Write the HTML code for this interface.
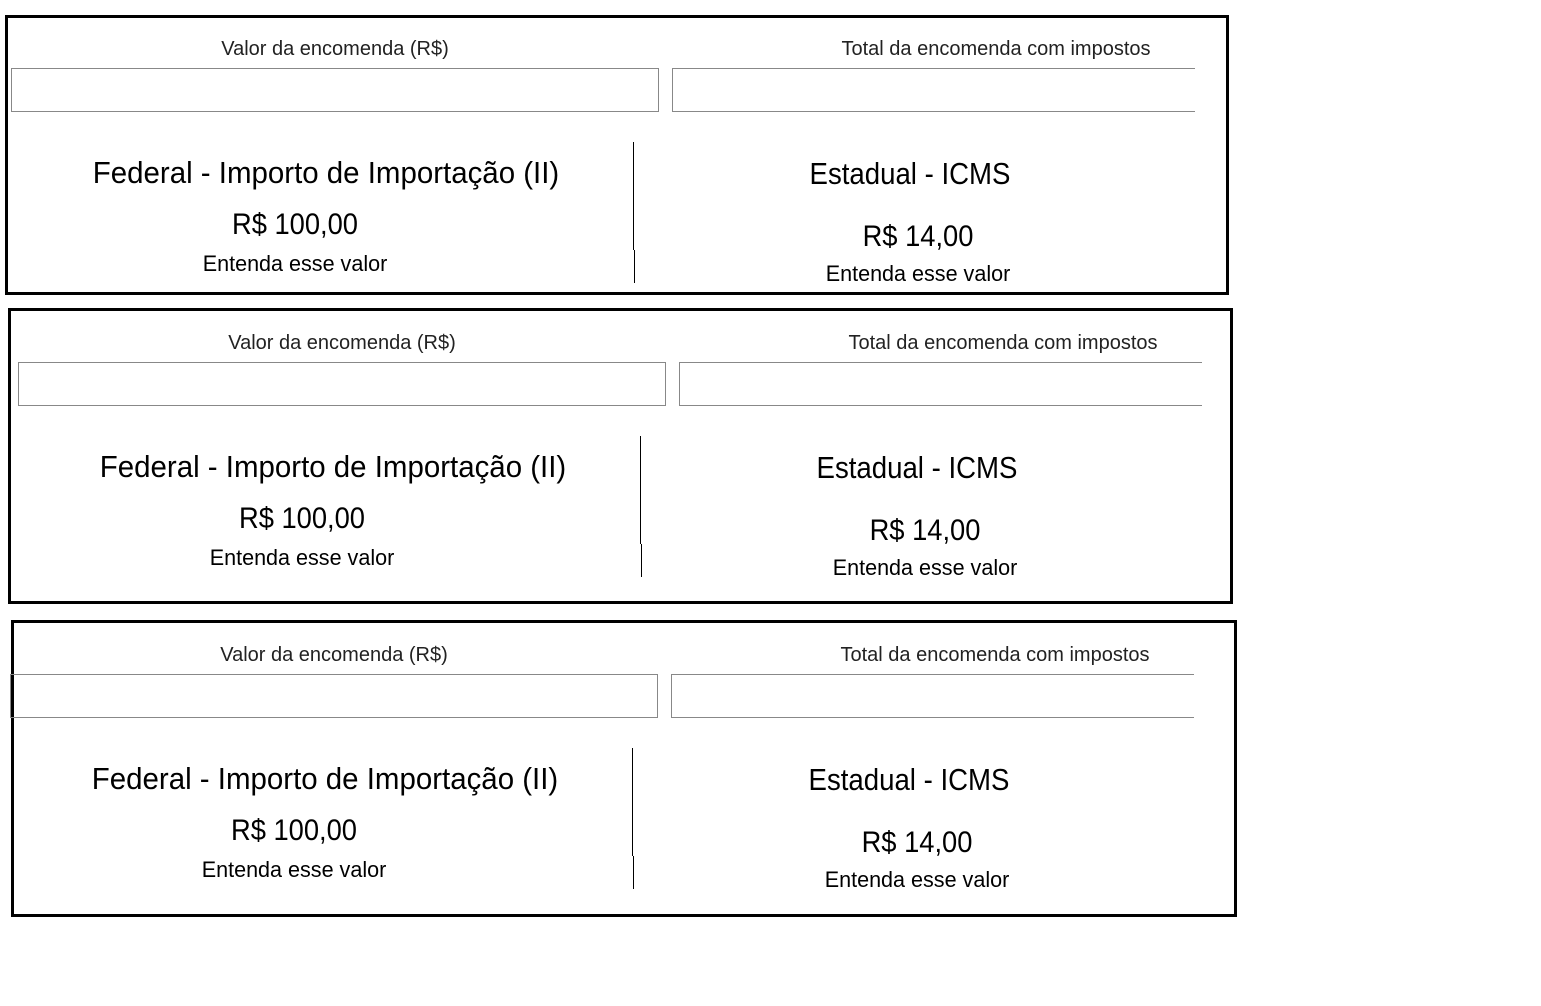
<!DOCTYPE html>
<html><head><meta charset="utf-8"><style>
body{margin:0;width:1541px;height:927px;background:#fff;position:relative;overflow:hidden;font-family:"Liberation Sans",Arial,sans-serif;color:#000}
.b{position:absolute;border:3px solid #000;box-sizing:border-box}
.c{position:absolute;white-space:nowrap;transform:translateX(-50%)}
.c span{display:inline-block}
.lab{font-size:20px;color:#222}
.in{position:absolute;border:1px solid #888;box-sizing:border-box;height:44px}
.in2{border-right:none}
.h{font-size:31px}
.h span{transform:scaleX(.95)}
.h.i span{transform:scaleX(.89)}
.v{font-size:30px}
.v span{transform:scaleX(.91)}
.e{font-size:22px}
.e span{transform:scaleX(.98)}
.d{position:absolute;width:1px;background:#000}
</style></head><body>

<div class="b" style="left:5px;top:15px;width:1224px;height:280px"></div>
<div class="b" style="left:8px;top:308px;width:1225px;height:296px"></div>
<div class="b" style="left:11px;top:620px;width:1226px;height:297px"></div>

<div style="position:absolute;left:0;top:0">
<div class="c lab" style="left:335px;top:38px">Valor da encomenda (R$)</div>
<div class="c lab" style="left:996px;top:38px">Total da encomenda com impostos</div>
<div class="in" style="left:11px;top:68px;width:648px"></div>
<div class="in in2" style="left:672px;top:68px;width:523px"></div>
<div class="c h" style="left:326px;top:155px"><span>Federal - Importo de Importação (II)</span></div>
<div class="c v" style="left:295px;top:208px"><span>R$ 100,00</span></div>
<div class="c e" style="left:295px;top:251px"><span>Entenda esse valor</span></div>
<div class="c h i" style="left:910px;top:156px"><span>Estadual - ICMS</span></div>
<div class="c v" style="left:918px;top:220px"><span>R$ 14,00</span></div>
<div class="c e" style="left:918px;top:261px"><span>Entenda esse valor</span></div>
<div class="d" style="left:633px;top:142px;height:108px"></div>
<div class="d" style="left:634px;top:250px;height:33px"></div>
</div>

<div style="position:absolute;left:7px;top:294px;width:1300px;height:400px">
<div class="c lab" style="left:335px;top:38px">Valor da encomenda (R$)</div>
<div class="c lab" style="left:996px;top:38px">Total da encomenda com impostos</div>
<div class="in" style="left:11px;top:68px;width:648px"></div>
<div class="in in2" style="left:672px;top:68px;width:523px"></div>
<div class="c h" style="left:326px;top:155px"><span>Federal - Importo de Importação (II)</span></div>
<div class="c v" style="left:295px;top:208px"><span>R$ 100,00</span></div>
<div class="c e" style="left:295px;top:251px"><span>Entenda esse valor</span></div>
<div class="c h i" style="left:910px;top:156px"><span>Estadual - ICMS</span></div>
<div class="c v" style="left:918px;top:220px"><span>R$ 14,00</span></div>
<div class="c e" style="left:918px;top:261px"><span>Entenda esse valor</span></div>
<div class="d" style="left:633px;top:142px;height:108px"></div>
<div class="d" style="left:634px;top:250px;height:33px"></div>
</div>

<div style="position:absolute;left:-1px;top:606px;width:1300px;height:400px">
<div class="c lab" style="left:335px;top:38px">Valor da encomenda (R$)</div>
<div class="c lab" style="left:996px;top:38px">Total da encomenda com impostos</div>
<div class="in" style="left:11px;top:68px;width:648px"></div>
<div class="in in2" style="left:672px;top:68px;width:523px"></div>
<div class="c h" style="left:326px;top:155px"><span>Federal - Importo de Importação (II)</span></div>
<div class="c v" style="left:295px;top:208px"><span>R$ 100,00</span></div>
<div class="c e" style="left:295px;top:251px"><span>Entenda esse valor</span></div>
<div class="c h i" style="left:910px;top:156px"><span>Estadual - ICMS</span></div>
<div class="c v" style="left:918px;top:220px"><span>R$ 14,00</span></div>
<div class="c e" style="left:918px;top:261px"><span>Entenda esse valor</span></div>
<div class="d" style="left:633px;top:142px;height:108px"></div>
<div class="d" style="left:634px;top:250px;height:33px"></div>
</div>

</body></html>
